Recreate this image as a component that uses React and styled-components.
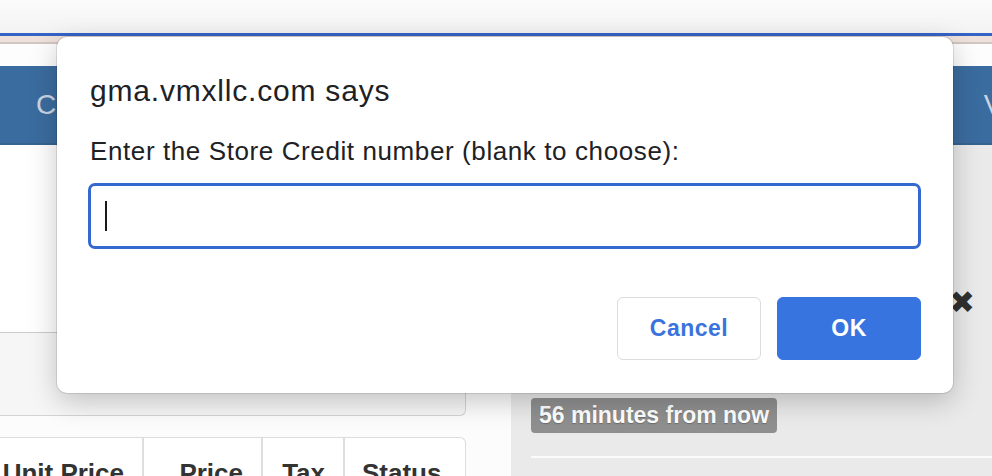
import styled, { createGlobalStyle } from "styled-components";

const Global = createGlobalStyle`
  html, body { margin: 0; padding: 0; }
  body {
    width: 992px; height: 476px; overflow: hidden;
    font-family: "Liberation Sans", Arial, sans-serif;
    background: #fafafa;
  }
  #root { position: relative; height: 476px; overflow: hidden; }
`

const BrowserBar = styled.div`
  height: 33px;
  background: linear-gradient(180deg, #fbfbfb 0%, #f3f3f3 100%);
`
const LoadLine = styled.div`
  height: 3px;
  background: #3563c6;
`
const PinkStrip = styled.div`
  height: 6px;
  background: #eee0da;
  border-bottom: 2px solid #d2c6c1;
`
const Spacer = styled.div`
  height: ${p => p.h}px;
  background: #fdfdfd;
`

const Nav = styled.nav`
  height: 77px;
  background: #3b6c9f;
  border-bottom: 2px solid #36638f;
  display: flex;
  align-items: center;
  justify-content: space-between;
  padding-left: 36px;
  overflow: hidden;
`
const NavItem = styled.span`
  color: #c9d5e3;
  font-size: 28px;
  margin-right: ${p => p.$pull || 0}px;
`

const Main = styled.div`
  display: grid;
  grid-template-columns: 511px 1fr;
  height: 331px;
  overflow: hidden;
`
const LeftCol = styled.div`
  background: #fcfcfc;
  display: flex;
  flex-direction: column;
`
const TopCard = styled.div`
  width: 466px;
  height: 187px;
  background: linear-gradient(90deg, #ffffff 0%, #f7f7f7 100%);
  border-bottom: 1px solid #cbcbcb;
`
const SubCard = styled.div`
  width: 465px;
  height: 82px;
  background: #f6f6f6;
  border-right: 1px solid #d3d3d3;
  border-bottom: 1px solid #d3d3d3;
  border-bottom-right-radius: 6px;
`
const Table = styled.div`
  margin-top: 21px;
  width: 465px;
  display: grid;
  grid-template-columns: 142px 119px 82px 1fr;
  border-top: 1px solid #dcdcdc;
  border-right: 1px solid #dcdcdc;
  border-top-right-radius: 6px;
  background: #fff;
`
const HeadCell = styled.div`
  padding: 20px 18px 0 ${p => (p.$left ? 17 : 0)}px;
  height: 60px;
  text-align: ${p => (p.$left ? "left" : "right")};
  font-size: 26px;
  font-weight: 700;
  color: #333;
  white-space: nowrap;
  border-left: ${p => (p.$first ? "none" : "2px solid #dedede")};
`

const RightCol = styled.div`
  background: #eaeaea;
  display: flex;
  flex-direction: column;
  padding: 0 20px;
`
const CloseRow = styled.div`
  margin-top: 145px;
  display: flex;
  justify-content: flex-end;
  height: 24px;
`
const CloseMark = styled.span`
  font-family: "DejaVu Sans", sans-serif;
  font-size: 31px;
  line-height: 24px;
  margin-right: -3px;
  color: #303030;
`
const Badge = styled.span`
  align-self: flex-start;
  margin-top: 84px;
  height: 35px;
  line-height: 35px;
  padding: 0 8px;
  border-radius: 4px;
  background: #8f8f8f;
  color: #fff;
  font-size: 23px;
  font-weight: 700;
  text-shadow: 0 1px 1px rgba(0, 0, 0, 0.25);
`
const Rule = styled.div`
  margin-top: 23px;
  margin-right: -20px;
  height: 2px;
  background: #fbfbfb;
`

const Dialog = styled.div`
  position: absolute;
  left: 57px;
  top: 37px;
  width: 896px;
  height: 356px;
  box-sizing: border-box;
  padding: 36px 32px 0 31px;
  background: #fff;
  border-radius: 10px;
  box-shadow: 0 8px 28px rgba(0, 0, 0, 0.22), 0 0 0 1px rgba(0, 0, 0, 0.1);
  display: flex;
  flex-direction: column;
`
const Title = styled.h1`
  margin: 0 0 0 2px;
  font-size: 30px;
  line-height: 36px;
  font-weight: 400;
  letter-spacing: 0.8px;
  color: #202124;
`
const Message = styled.p`
  margin: 27px 0 0 2px;
  font-size: 26px;
  line-height: 30px;
  letter-spacing: 0.6px;
  color: #202124;
`
const Field = styled.div`
  margin-top: 17px;
  height: 66px;
  box-sizing: border-box;
  border: 3px solid #3369d1;
  border-radius: 7px;
  display: flex;
  align-items: center;
  padding-left: 14px;
`
const Caret = styled.span`
  width: 2px;
  height: 30px;
  background: #1a1a1a;
`
const Actions = styled.div`
  margin-top: 48px;
  display: flex;
  justify-content: flex-end;
  gap: 16px;
`
const Button = styled.button`
  width: 144px;
  height: 63px;
  border-radius: 6px;
  font-family: "Liberation Sans", Arial, sans-serif;
  font-size: 23px;
  font-weight: 700;
  letter-spacing: 0.5px;
  cursor: pointer;
  border: 1px solid ${p => (p.$primary ? "#3874e0" : "#dadce0")};
  background: ${p => (p.$primary ? "#3874e0" : "#fff")};
  color: ${p => (p.$primary ? "#fff" : "#3873de")};
`

export default function App() {
  return (
    <>
      <Global />
      <BrowserBar />
      <LoadLine />
      <PinkStrip />
      <Spacer h={22} />
      <Nav>
        <NavItem>Customers</NavItem>
        <NavItem $pull={-52}>View</NavItem>
      </Nav>
      <Main>
        <LeftCol>
          <TopCard />
          <SubCard />
          <Table>
            <HeadCell $first>Unit Price</HeadCell>
            <HeadCell>Price</HeadCell>
            <HeadCell>Tax</HeadCell>
            <HeadCell $left>Status</HeadCell>
          </Table>
        </LeftCol>
        <RightCol>
          <CloseRow>
            <CloseMark>✖</CloseMark>
          </CloseRow>
          <Badge>56 minutes from now</Badge>
          <Rule />
        </RightCol>
      </Main>
      <Dialog role="dialog">
        <Title>gma.vmxllc.com says</Title>
        <Message>Enter the Store Credit number (blank to choose):</Message>
        <Field>
          <Caret />
        </Field>
        <Actions>
          <Button>Cancel</Button>
          <Button $primary>OK</Button>
        </Actions>
      </Dialog>
    </>
  );
}
